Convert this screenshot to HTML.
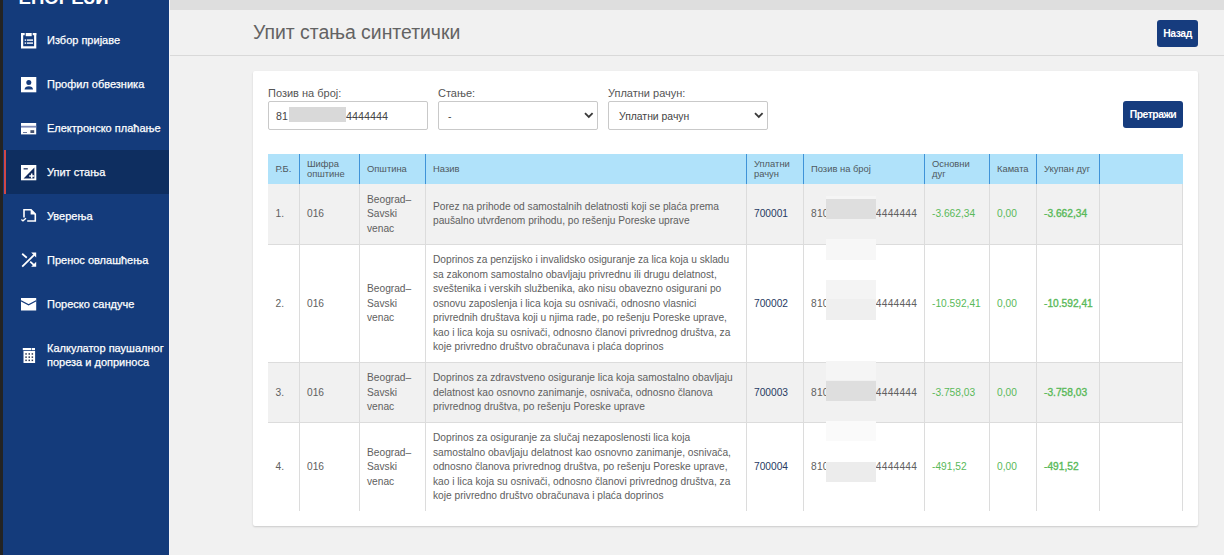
<!DOCTYPE html>
<html><head><meta charset="utf-8">
<style>
*{margin:0;padding:0;box-sizing:border-box}
html,body{width:1224px;height:555px;overflow:hidden;background:#f1f1f1;font-family:"Liberation Sans",sans-serif}
.a{position:absolute;white-space:nowrap}
.side{color:#fff;-webkit-text-stroke:0.25px #fff;font-size:11px;line-height:14px}
.th{color:#4f5960;font-size:9.4px;line-height:10px}
.td{color:#606060;font-size:10.2px;line-height:14.57px}
.gr{color:#59b959}
.bl{color:#263a63}
.b{-webkit-text-stroke:0.35px #59b959}
svg{display:block}
</style></head><body>

<div class="a" style="left:0;top:0;width:3px;height:555px;background:#232323"></div>
<div class="a" style="left:3px;top:0;width:166px;height:555px;background:#143b7b"></div>
<div class="a" style="left:4px;top:150px;width:165px;height:44px;background:#0e2e60"></div>
<div class="a" style="left:4.2px;top:150px;width:1.6px;height:44px;background:#d04848"></div>
<div class="a" style="left:18.5px;top:-13px;color:#fff;font-size:18.6px;font-weight:bold;line-height:22px">ЕПОРЕЗИ</div>
<div class="a side" style="left:47px;top:33px">Избор пријаве</div>
<div class="a" style="left:20.8px;top:32.6px"><svg width="16" height="16" viewBox="0 0 16 16"><path d="M1.1 0V14.3H14.2V0" fill="none" stroke="#fff" stroke-width="2.2"/><path d="M0 1.1H3.7M11.7 1.1H15.3" stroke="#fff" stroke-width="2.2"/><rect x="4.7" y="0" width="6" height="3.2" fill="#fff"/><rect x="3.7" y="6.4" width="1.3" height="1.4" fill="#fff"/><rect x="5.8" y="6.4" width="6.2" height="1.4" fill="#fff"/><rect x="3.7" y="9.4" width="1.3" height="1.4" fill="#fff"/><rect x="5.8" y="9.4" width="6.2" height="1.4" fill="#fff"/></svg></div>
<div class="a side" style="left:47px;top:77px">Профил обвезника</div>
<div class="a" style="left:20.8px;top:76.8px"><svg width="16" height="16" viewBox="0 0 16 16"><rect x="0" y="0" width="15.3" height="15.3" fill="#fff"/><circle cx="7.8" cy="5.5" r="2.5" fill="#153b7c"/><path d="M3.6 12.5c0-2 2-3.2 4.2-3.2s4.2 1.2 4.2 3.2z" fill="#153b7c"/></svg></div>
<div class="a side" style="left:47px;top:121px">Електронско плаћање</div>
<div class="a" style="left:21px;top:122.7px"><svg width="16" height="13" viewBox="0 0 16 13"><rect x="0" y="0" width="15.2" height="11.4" fill="#fff"/><rect x="0" y="2.8" width="15.2" height="1.8" fill="#7f8bb8"/><rect x="9.4" y="7.2" width="3.8" height="2.8" fill="#44506e"/><rect x="2" y="9" width="4" height="1" fill="#6d7aa0"/></svg></div>
<div class="a side" style="left:47px;top:165px">Упит стања</div>
<div class="a" style="left:20.8px;top:164.7px"><svg width="16" height="16" viewBox="0 0 16 16"><rect x="0" y="0" width="15.3" height="15.3" fill="#fff"/><path d="M2.6 13.4L13.4 2.6V13.4z" fill="#102a5c"/><rect x="2.6" y="3.1" width="4.2" height="1.4" fill="#34446a"/><path d="M10.7 8.6v5M8.2 11.1h5" stroke="#fff" stroke-width="1.5"/></svg></div>
<div class="a side" style="left:47px;top:209px">Уверења</div>
<div class="a" style="left:20px;top:208px"><svg width="18" height="16" viewBox="0 0 18 16"><path d="M4 9.6V1.8h7l4.3 4.3V13H7.2" fill="none" stroke="#fff" stroke-width="1.6"/><path d="M10.6 1.2v5.3h5.3z" fill="#fff"/><path d="M1.4 11.4l1.6 1.5 3-2.6" fill="none" stroke="#fff" stroke-width="1.4"/></svg></div>
<div class="a side" style="left:47px;top:253px">Пренос овлашћења</div>
<div class="a" style="left:20.6px;top:252.4px"><svg width="17" height="17" viewBox="0 0 17 17"><path d="M1.2 1.8l4.6 4M1.2 14.6L13.2 2.8M9.2 9.6l4.4 4" fill="none" stroke="#fff" stroke-width="1.8"/><path d="M10.2 0.6h5v5z" fill="#fff"/><path d="M15.2 9.8v5h-5z" fill="#fff"/></svg></div>
<div class="a side" style="left:47px;top:297px">Пореско сандуче</div>
<div class="a" style="left:21px;top:298.3px"><svg width="16" height="13" viewBox="0 0 16 13"><rect x="0" y="0" width="15.2" height="12.5" fill="#fff"/><path d="M0 2.8l7.6 4 7.6-4" fill="none" stroke="#153b7c" stroke-width="1.2"/></svg></div>
<div class="a side" style="left:47px;top:341px">Калкулатор паушалног<br>пореза и доприноса</div>
<div class="a" style="left:21.5px;top:348px"><svg width="14" height="16" viewBox="0 0 14 16"><rect x="0.8" y="0" width="8.6" height="2.2" fill="#fff"/><rect x="10" y="0" width="3" height="2.2" fill="#fff"/><rect x="1.5" y="3" width="11.6" height="12" fill="#fff"/><g fill="#2a3550"><rect x="3.3" y="5.2" width="1.5" height="1.5"/><rect x="6.5" y="5.2" width="1.5" height="1.5"/><rect x="9.6" y="5.2" width="1.5" height="1.5"/><rect x="3.3" y="8.4" width="1.5" height="1.5"/><rect x="6.5" y="8.4" width="1.5" height="1.5"/><rect x="9.6" y="8.4" width="1.5" height="1.5"/><rect x="3.3" y="11.6" width="1.5" height="1.5"/><rect x="6.5" y="11.6" width="1.5" height="1.5"/><rect x="9.6" y="11.6" width="1.5" height="1.5"/></g></svg></div>
<div class="a" style="left:169px;top:0;width:1055px;height:10px;background:#dedede"></div>
<div class="a" style="left:169px;top:0px;width:1px;height:555px;background:#f6f6fa"></div>
<div class="a" style="left:170px;top:55px;width:1054px;height:1px;background:#d9d9d9"></div>
<div class="a" style="left:253px;top:21px;color:#636363;font-size:19.4px;line-height:22px">Упит стања синтетички</div>
<div class="a" style="left:1157px;top:19.5px;width:41px;height:27px;border-radius:3px;background:#163c7e;color:#fff;font-weight:bold;font-size:10.4px;letter-spacing:-0.45px;line-height:27px;text-align:center">Назад</div>
<div class="a" style="left:253px;top:71px;width:945px;height:455px;background:#fff;border-radius:2px;box-shadow:0 1px 2px rgba(0,0,0,0.16)"></div>
<div class="a" style="left:268px;top:86px;color:#555;font-size:11px;line-height:14px">Позив на број:</div>
<div class="a" style="left:438px;top:86px;color:#555;font-size:11px;line-height:14px">Стање:</div>
<div class="a" style="left:608px;top:86px;color:#555;font-size:11px;line-height:14px">Уплатни рачун:</div>
<div class="a" style="left:268px;top:101px;width:160px;height:28.5px;border:1px solid #c9c9c9;border-radius:2px;background:#fff"></div>
<div class="a" style="left:438px;top:101px;width:160px;height:28.5px;border:1px solid #c9c9c9;border-radius:2px;background:#fff"></div>
<div class="a" style="left:608px;top:101px;width:160px;height:28.5px;border:1px solid #c9c9c9;border-radius:2px;background:#fff"></div>
<div class="a" style="left:276px;top:108.5px;color:#444;font-size:10.6px;line-height:14px">81</div>
<div class="a" style="left:346px;top:108.5px;color:#444;font-size:10.8px;line-height:14px">4444444</div>
<div class="a" style="left:289px;top:107px;width:57px;height:15px;background:#d9d9d9"></div>
<div class="a" style="left:448px;top:109.5px;color:#444;font-size:10.4px;line-height:14px">-</div>
<div class="a" style="left:619px;top:109.5px;color:#444;font-size:10.4px;line-height:14px">Уплатни рачун</div>
<svg class="a" style="left:583.8px;top:112px" width="10" height="7" viewBox="0 0 10 7"><path d="M1 1.2l3.8 3.8 3.8-3.8" fill="none" stroke="#3a3a3a" stroke-width="1.8"/></svg>
<svg class="a" style="left:753.8px;top:112px" width="10" height="7" viewBox="0 0 10 7"><path d="M1 1.2l3.8 3.8 3.8-3.8" fill="none" stroke="#3a3a3a" stroke-width="1.8"/></svg>
<div class="a" style="left:1123px;top:101px;width:60px;height:27px;border-radius:3px;background:#163c7e;color:#fff;font-weight:bold;font-size:10.4px;letter-spacing:-0.5px;line-height:27.5px;text-align:center">Претражи</div>
<div class="a" style="left:268px;top:154px;width:915px;height:30px;background:#b0e2fa"></div>
<div class="a" style="left:299px;top:154px;width:1px;height:30px;background:#3f93d8"></div>
<div class="a" style="left:359px;top:154px;width:1px;height:30px;background:#3f93d8"></div>
<div class="a" style="left:425px;top:154px;width:1px;height:30px;background:#3f93d8"></div>
<div class="a" style="left:746px;top:154px;width:1px;height:30px;background:#3f93d8"></div>
<div class="a" style="left:803px;top:154px;width:1px;height:30px;background:#3f93d8"></div>
<div class="a" style="left:924px;top:154px;width:1px;height:30px;background:#3f93d8"></div>
<div class="a" style="left:989px;top:154px;width:1px;height:30px;background:#3f93d8"></div>
<div class="a" style="left:1036px;top:154px;width:1px;height:30px;background:#3f93d8"></div>
<div class="a" style="left:1099px;top:154px;width:1px;height:30px;background:#3f93d8"></div>
<div class="a th" style="left:275.5px;top:164.0px">Р.Б.</div>
<div class="a th" style="left:307px;top:159.0px">Шифра<br>општине</div>
<div class="a th" style="left:367px;top:164.0px">Општина</div>
<div class="a th" style="left:433px;top:164.0px">Назив</div>
<div class="a th" style="left:754px;top:159.0px">Уплатни<br>рачун</div>
<div class="a th" style="left:811px;top:164.0px">Позив на број</div>
<div class="a th" style="left:932px;top:159.0px">Основни<br>дуг</div>
<div class="a th" style="left:997px;top:164.0px">Камата</div>
<div class="a th" style="left:1044px;top:164.0px">Укупан дуг</div>
<div class="a" style="left:268px;top:184px;width:915px;height:60px;background:#f1f1f1"></div>
<div class="a" style="left:299px;top:184px;width:1px;height:60px;background:#dcdcdc"></div>
<div class="a" style="left:359px;top:184px;width:1px;height:60px;background:#dcdcdc"></div>
<div class="a" style="left:425px;top:184px;width:1px;height:60px;background:#dcdcdc"></div>
<div class="a" style="left:746px;top:184px;width:1px;height:60px;background:#dcdcdc"></div>
<div class="a" style="left:803px;top:184px;width:1px;height:60px;background:#dcdcdc"></div>
<div class="a" style="left:924px;top:184px;width:1px;height:60px;background:#dcdcdc"></div>
<div class="a" style="left:989px;top:184px;width:1px;height:60px;background:#dcdcdc"></div>
<div class="a" style="left:1036px;top:184px;width:1px;height:60px;background:#dcdcdc"></div>
<div class="a" style="left:1099px;top:184px;width:1px;height:60px;background:#dcdcdc"></div>
<div class="a" style="left:1182px;top:184px;width:1px;height:60px;background:#dcdcdc"></div>
<div class="a td " style="left:275.5px;top:207.22px">1.</div>
<div class="a td " style="left:307px;top:207.22px">016</div>
<div class="a td " style="left:367px;top:192.65px">Beograd–<br>Savski<br>venac</div>
<div class="a td " style="left:433px;top:199.93px">Porez na prihode od samostalnih delatnosti koji se plaća prema<br>paušalno utvrđenom prihodu, po rešenju Poreske uprave</div>
<div class="a td bl" style="left:754px;top:207.22px">700001</div>
<div class="a td " style="left:811px;top:207.22px"><span style="letter-spacing:0.23px">810000000004444444</span></div>
<div class="a td gr" style="left:932px;top:207.22px">-3.662,34</div>
<div class="a td gr" style="left:997px;top:207.22px">0,00</div>
<div class="a td gr b" style="left:1044px;top:207.22px">-3.662,34</div>
<div class="a" style="left:268px;top:244px;width:915px;height:118px;background:#fff"></div>
<div class="a" style="left:268px;top:244px;width:915px;height:1px;background:#dcdcdc"></div>
<div class="a" style="left:299px;top:244px;width:1px;height:118px;background:#dcdcdc"></div>
<div class="a" style="left:359px;top:244px;width:1px;height:118px;background:#dcdcdc"></div>
<div class="a" style="left:425px;top:244px;width:1px;height:118px;background:#dcdcdc"></div>
<div class="a" style="left:746px;top:244px;width:1px;height:118px;background:#dcdcdc"></div>
<div class="a" style="left:803px;top:244px;width:1px;height:118px;background:#dcdcdc"></div>
<div class="a" style="left:924px;top:244px;width:1px;height:118px;background:#dcdcdc"></div>
<div class="a" style="left:989px;top:244px;width:1px;height:118px;background:#dcdcdc"></div>
<div class="a" style="left:1036px;top:244px;width:1px;height:118px;background:#dcdcdc"></div>
<div class="a" style="left:1099px;top:244px;width:1px;height:118px;background:#dcdcdc"></div>
<div class="a" style="left:1182px;top:244px;width:1px;height:118px;background:#dcdcdc"></div>
<div class="a td " style="left:275.5px;top:296.72px">2.</div>
<div class="a td " style="left:307px;top:296.72px">016</div>
<div class="a td " style="left:367px;top:282.14px">Beograd–<br>Savski<br>venac</div>
<div class="a td " style="left:433px;top:253.00px">Doprinos za penzijsko i invalidsko osiguranje za lica koja u skladu<br>sa zakonom samostalno obavljaju privrednu ili drugu delatnost,<br>sveštenika i verskih službenika, ako nisu obavezno osigurani po<br>osnovu zaposlenja i lica koja su osnivači, odnosno vlasnici<br>privrednih društava koji u njima rade, po rešenju Poreske uprave,<br>kao i lica koja su osnivači, odnosno članovi privrednog društva, za<br>koje privredno društvo obračunava i plaća doprinos</div>
<div class="a td bl" style="left:754px;top:296.72px">700002</div>
<div class="a td " style="left:811px;top:296.72px"><span style="letter-spacing:0.23px">810000000004444444</span></div>
<div class="a td gr" style="left:932px;top:296.72px">-10.592,41</div>
<div class="a td gr" style="left:997px;top:296.72px">0,00</div>
<div class="a td gr b" style="left:1044px;top:296.72px">-10.592,41</div>
<div class="a" style="left:268px;top:362px;width:915px;height:60px;background:#f1f1f1"></div>
<div class="a" style="left:268px;top:362px;width:915px;height:1px;background:#dcdcdc"></div>
<div class="a" style="left:299px;top:362px;width:1px;height:60px;background:#dcdcdc"></div>
<div class="a" style="left:359px;top:362px;width:1px;height:60px;background:#dcdcdc"></div>
<div class="a" style="left:425px;top:362px;width:1px;height:60px;background:#dcdcdc"></div>
<div class="a" style="left:746px;top:362px;width:1px;height:60px;background:#dcdcdc"></div>
<div class="a" style="left:803px;top:362px;width:1px;height:60px;background:#dcdcdc"></div>
<div class="a" style="left:924px;top:362px;width:1px;height:60px;background:#dcdcdc"></div>
<div class="a" style="left:989px;top:362px;width:1px;height:60px;background:#dcdcdc"></div>
<div class="a" style="left:1036px;top:362px;width:1px;height:60px;background:#dcdcdc"></div>
<div class="a" style="left:1099px;top:362px;width:1px;height:60px;background:#dcdcdc"></div>
<div class="a" style="left:1182px;top:362px;width:1px;height:60px;background:#dcdcdc"></div>
<div class="a td " style="left:275.5px;top:385.71px">3.</div>
<div class="a td " style="left:307px;top:385.71px">016</div>
<div class="a td " style="left:367px;top:371.14px">Beograd–<br>Savski<br>venac</div>
<div class="a td " style="left:433px;top:371.14px">Doprinos za zdravstveno osiguranje lica koja samostalno obavljaju<br>delatnost kao osnovno zanimanje, osnivača, odnosno članova<br>privrednog društva, po rešenju Poreske uprave</div>
<div class="a td bl" style="left:754px;top:385.71px">700003</div>
<div class="a td " style="left:811px;top:385.71px"><span style="letter-spacing:0.23px">810000000004444444</span></div>
<div class="a td gr" style="left:932px;top:385.71px">-3.758,03</div>
<div class="a td gr" style="left:997px;top:385.71px">0,00</div>
<div class="a td gr b" style="left:1044px;top:385.71px">-3.758,03</div>
<div class="a" style="left:268px;top:422px;width:915px;height:89px;background:#fff"></div>
<div class="a" style="left:268px;top:422px;width:915px;height:1px;background:#dcdcdc"></div>
<div class="a" style="left:299px;top:422px;width:1px;height:89px;background:#dcdcdc"></div>
<div class="a" style="left:359px;top:422px;width:1px;height:89px;background:#dcdcdc"></div>
<div class="a" style="left:425px;top:422px;width:1px;height:89px;background:#dcdcdc"></div>
<div class="a" style="left:746px;top:422px;width:1px;height:89px;background:#dcdcdc"></div>
<div class="a" style="left:803px;top:422px;width:1px;height:89px;background:#dcdcdc"></div>
<div class="a" style="left:924px;top:422px;width:1px;height:89px;background:#dcdcdc"></div>
<div class="a" style="left:989px;top:422px;width:1px;height:89px;background:#dcdcdc"></div>
<div class="a" style="left:1036px;top:422px;width:1px;height:89px;background:#dcdcdc"></div>
<div class="a" style="left:1099px;top:422px;width:1px;height:89px;background:#dcdcdc"></div>
<div class="a" style="left:1182px;top:422px;width:1px;height:89px;background:#dcdcdc"></div>
<div class="a td " style="left:275.5px;top:460.22px">4.</div>
<div class="a td " style="left:307px;top:460.22px">016</div>
<div class="a td " style="left:367px;top:445.64px">Beograd–<br>Savski<br>venac</div>
<div class="a td " style="left:433px;top:431.07px">Doprinos za osiguranje za slučaj nezaposlenosti lica koja<br>samostalno obavljaju delatnost kao osnovno zanimanje, osnivača,<br>odnosno članova privrednog društva, po rešenju Poreske uprave,<br>kao i lica koja su osnivači, odnosno članovi privrednog društva, za<br>koje privredno društvo obračunava i plaća doprinos</div>
<div class="a td bl" style="left:754px;top:460.22px">700004</div>
<div class="a td " style="left:811px;top:460.22px"><span style="letter-spacing:0.23px">810000000004444444</span></div>
<div class="a td gr" style="left:932px;top:460.22px">-491,52</div>
<div class="a td gr" style="left:997px;top:460.22px">0,00</div>
<div class="a td gr b" style="left:1044px;top:460.22px">-491,52</div>
<div class="a" style="left:826px;top:196px;width:50px;height:3px;background:#f5f5f5"></div>
<div class="a" style="left:826px;top:199px;width:50px;height:20px;background:#dedede"></div>
<div class="a" style="left:826px;top:238.8px;width:50px;height:21.0px;background:#f7f7f7"></div>
<div class="a" style="left:826px;top:280px;width:50px;height:19.399999999999977px;background:#f4f4f4"></div>
<div class="a" style="left:826px;top:299.4px;width:50px;height:20.200000000000045px;background:#efefef"></div>
<div class="a" style="left:826px;top:361.3px;width:50px;height:19.099999999999966px;background:#f5f5f5"></div>
<div class="a" style="left:826px;top:381px;width:50px;height:19.5px;background:#dedede"></div>
<div class="a" style="left:826px;top:420.7px;width:50px;height:20.80000000000001px;background:#fafafa"></div>
<div class="a" style="left:826px;top:461.6px;width:50px;height:20.19999999999999px;background:#ececec"></div>
</body></html>
